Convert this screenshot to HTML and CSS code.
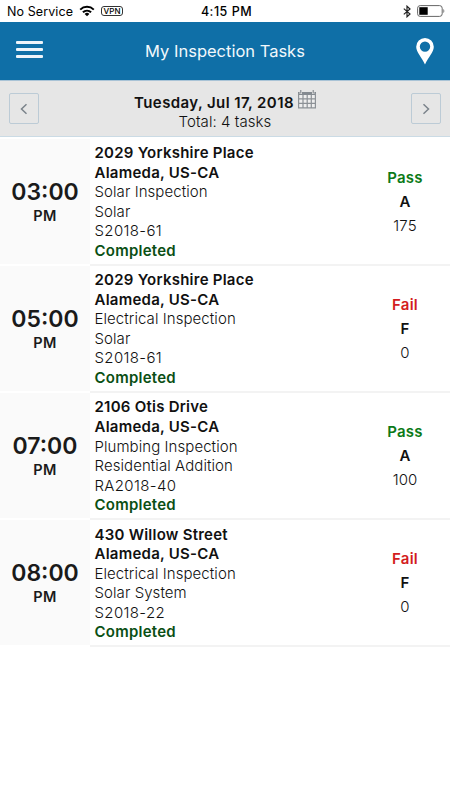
FILE: index.html
```html
<!DOCTYPE html>
<html lang="en">
<head>
<meta charset="utf-8">
<title>My Inspection Tasks</title>
<link rel="stylesheet" href="styles.css">
</head>
<body>
<div class="status">
  <div class="status-left">
    <span class="carrier">No Service</span>
    <svg class="wifi" width="16" height="12" viewBox="0 0 16 12"><g fill="none" stroke="#000" stroke-width="2"><path d="M1.2 4.6a9.8 9.8 0 0 1 13.6 0"/><path d="M3.9 7.3a6 6 0 0 1 8.2 0"/></g><path d="M8 11.3 5.6 8.9a3.5 3.5 0 0 1 4.8 0z"/></svg>
    <span class="vpn">VPN</span>
  </div>
  <div class="clock">4:15 PM</div>
  <div class="status-right">
    <svg width="8" height="13" viewBox="0 0 8 13"><path d="M.8 3.6 7 9 4 11.8V1.2L7 4 .8 9.4" fill="none" stroke="#222" stroke-width="1.2"/></svg>
    <svg width="28" height="12" viewBox="0 0 28 12"><rect x=".6" y=".6" width="24.6" height="10.8" rx="2.6" fill="#fff" stroke="#666" stroke-width="1"/><path d="M2.3 2.2h8.4v7.6H2.3z"/><path d="M26.3 4c1.4.6 1.4 3.4 0 4z" fill="#777"/></svg>
  </div>
</div>
<header class="bar">
  <div class="menu"><i></i><i></i><i></i></div>
  <h1>My Inspection Tasks</h1>
  <svg class="pin" width="18" height="27" viewBox="0 0 18 27"><path fill="#fff" fill-rule="evenodd" d="M9 0a8.8 8.8 0 0 1 8.8 8.8C17.8 14 12.5 19 9 26.5 5.5 19 .2 14 .2 8.8A8.8 8.8 0 0 1 9 0zm0 3.4a5.2 5.2 0 1 0 0 10.4A5.2 5.2 0 0 0 9 3.4z"/></svg>
</header>
<section class="datebar">
  <div class="nav"><svg width="8" height="12" viewBox="0 0 8 12"><path d="M6.5 1.3 1.5 6l5 4.7"/></svg></div>
  <div class="date">
    <div class="day"><span>Tuesday, Jul 17, 2018</span><svg width="18" height="19" viewBox="0 0 18 19"><path d="M.5 2.5h17v15.500H.5z" fill="#eee"/><path d="M0 2h18v3H0z" fill="#848a90"/><path d="M.6 3v15M5 5v13M9.2 5v13M13.3 5v13M17.4 3v15M0 8.8h18M0 13.3h18M0 17.9h18" stroke="#8c9196" stroke-width="1.2"/><path d="M2.8 0v4M15.2 0v4" stroke="#e4e4e4" stroke-width="2.4"/><path d="M2.8 0v3.5M15.2 0v3.5" stroke="#777d83" stroke-width="1"/></svg></div>
    <div class="total">Total: 4 tasks</div>
  </div>
  <div class="nav"><svg width="8" height="12" viewBox="0 0 8 12"><path d="m1.500 1.300 5 4.700-5 4.700"/></svg></div>
</section>
<main>
  <article class="task">
    <div class="time"><b>03:00</b><span>PM</span></div>
    <div class="info"><b>2029 Yorkshire Place</b><b>Alameda, US-CA</b><span>Solar Inspection</span><span>Solar</span><span class="code">S2018-61</span><b class="done">Completed</b></div>
    <div class="result"><b class="pass">Pass</b><b>A</b><span>175</span></div>
  </article>
  <article class="task">
    <div class="time"><b>05:00</b><span>PM</span></div>
    <div class="info"><b>2029 Yorkshire Place</b><b>Alameda, US-CA</b><span>Electrical Inspection</span><span>Solar</span><span class="code">S2018-61</span><b class="done">Completed</b></div>
    <div class="result"><b class="fail">Fail</b><b>F</b><span>0</span></div>
  </article>
  <article class="task">
    <div class="time"><b>07:00</b><span>PM</span></div>
    <div class="info"><b>2106 Otis Drive</b><b>Alameda, US-CA</b><span>Plumbing Inspection</span><span>Residential Addition</span><span class="code">RA2018-40</span><b class="done">Completed</b></div>
    <div class="result"><b class="pass">Pass</b><b>A</b><span>100</span></div>
  </article>
  <article class="task">
    <div class="time"><b>08:00</b><span>PM</span></div>
    <div class="info"><b>430 Willow Street</b><b>Alameda, US-CA</b><span>Electrical Inspection</span><span>Solar System</span><span class="code">S2018-22</span><b class="done">Completed</b></div>
    <div class="result"><b class="fail">Fail</b><b>F</b><span>0</span></div>
  </article>
</main>
</body>
</html>
```
FILE: styles.css
```css
* { box-sizing: border-box; }
body { margin: 0; background: #fff; color: #111; font-family: Inter, "Liberation Sans", sans-serif; font-size: 15px; font-weight: 300; letter-spacing: .07px; }
svg { display: block; }
b { font-weight: 600; letter-spacing: .24px; }
.status { height: 22px; display: grid; grid-template-columns: 1fr auto 1fr; align-items: center; padding: 0 5px 0 7px; color: #000; }
.status-left, .status-right { display: flex; align-items: center; }
.carrier { font-size: 12.5px; font-weight: 400; letter-spacing: .1px; }
.wifi { margin: -1px 6px 0 6px; }
.vpn { font-size: 8px; font-weight: 500; line-height: 8px; letter-spacing: .2px; border: 1px solid #333; border-radius: 3px; width: 22px; height: 10px; text-align: center; }
.clock { font-size: 12.5px; font-weight: 500; letter-spacing: .5px; padding-left: 1px; }
.status-right { justify-content: flex-end; gap: 6px; }
.bar { height: 58px; background: #0f6fa7; display: flex; align-items: center; justify-content: space-between; padding: 0 16px; }
.menu { width: 27px; height: 17px; display: flex; flex-direction: column; justify-content: space-between; margin-top: -3px; }
.menu i { height: 3px; background: #eef4fa; border-radius: 1px; }
h1 { margin: 0; padding-right: 9px; color: #f2f8fc; font-size: 16.5px; font-weight: 400; line-height: 20px; letter-spacing: 0; }
.datebar { height: 57px; background: #e6e6e6; border-top: 1px solid #a9c3d6; border-bottom: 1px solid #cbdbe5; display: flex; align-items: center; justify-content: space-between; padding: 0 9px; }
.nav { width: 30px; height: 31px; border: 1px solid #bccbd6; border-radius: 2px; display: flex; align-items: center; justify-content: center; }
.nav path { fill: none; stroke: #7b838b; stroke-width: 1.5; }
.date { text-align: center; line-height: 19.5px; padding-top: 7.5px; }
.day { display: flex; align-items: center; gap: 4px; font-weight: 600; letter-spacing: .4px; }
.day svg { margin-top: -7px; }
main { padding-top: 1.6px; }
.task { height: 127.2px; display: flex; }
.task > div { border-bottom: 2px solid #f3f3f3; }
.task > .time { width: 90px; background: #fafafa; border-color: #fff; display: flex; flex-direction: column; align-items: center; padding-top: 39px; }
.time b { font-size: 23px; line-height: 28px; letter-spacing: 0; color: #1a1a1a; }
.time span { font-size: 14.5px; font-weight: 600; line-height: 20px; letter-spacing: .4px; color: #1a1a1a; }
.info { flex: 1; display: flex; flex-direction: column; padding: 4.5px 0 0 4.5px; line-height: 19.55px; }
.done { color: #0a4f14; }
.code { letter-spacing: .35px; }
.result { width: 90px; display: flex; flex-direction: column; align-items: center; padding-top: 27px; line-height: 24px; }
.pass { color: #0b7a17; }
.fail { color: #d31c20; }
```
